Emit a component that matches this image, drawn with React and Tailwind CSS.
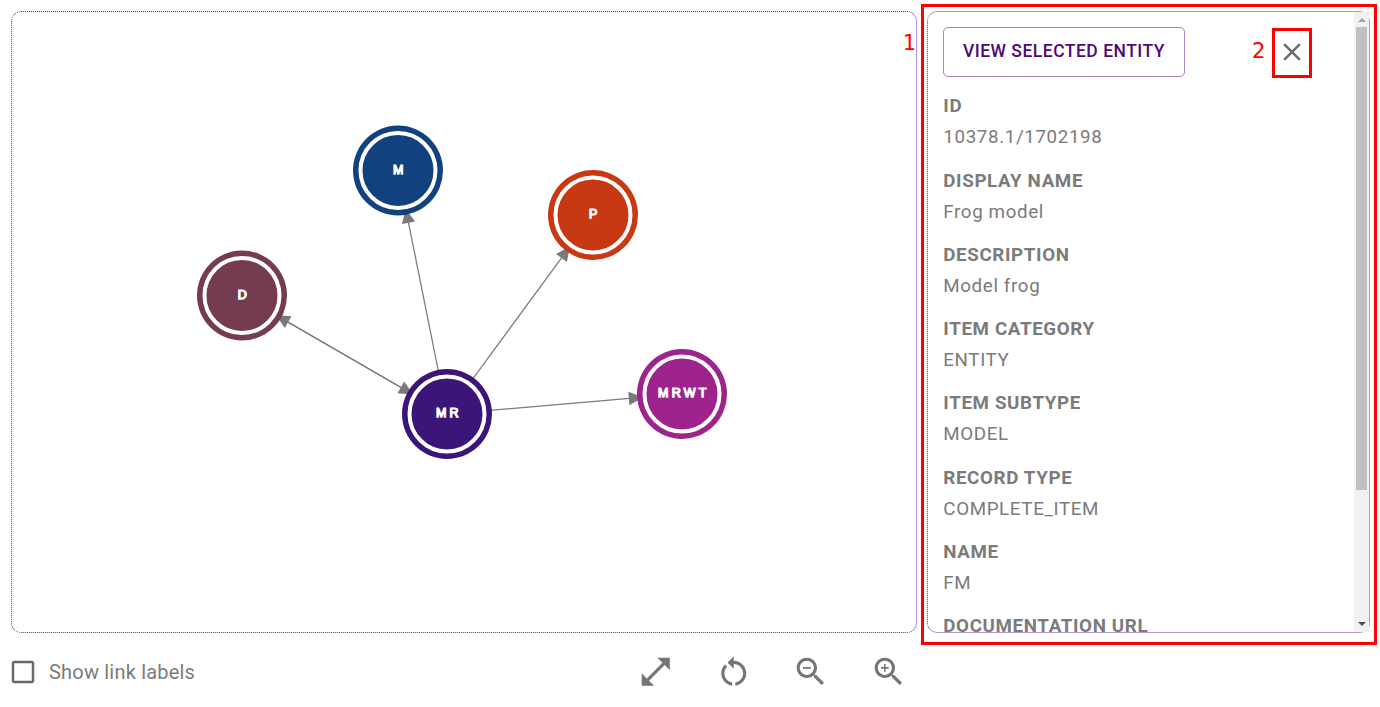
import React from "react";

const nodes = {
  D: { x: 242, y: 295.5, color: "#753b51" },
  M: { x: 398, y: 170.5, color: "#124180" },
  P: { x: 593, y: 215, color: "#c83813" },
  MR: { x: 447, y: 414, color: "#3c1578" },
  MRWT: { x: 682, y: 394, color: "#9e238d" },
};

const links = [
  ["MR", "D"],
  ["D", "MR"],
  ["MR", "M"],
  ["MR", "P"],
  ["MR", "MRWT"],
];

const fields = [
  ["ID", "10378.1/1702198"],
  ["DISPLAY NAME", "Frog model"],
  ["DESCRIPTION", "Model frog"],
  ["ITEM CATEGORY", "ENTITY"],
  ["ITEM SUBTYPE", "MODEL"],
  ["RECORD TYPE", "COMPLETE_ITEM"],
  ["NAME", "FM"],
  ["DOCUMENTATION URL", ""],
];

function Link({ from, to }) {
  const a = nodes[from];
  const b = nodes[to];
  const length = Math.hypot(b.x - a.x, b.y - a.y);
  const angle = (Math.atan2(b.y - a.y, b.x - a.x) * 180) / Math.PI;
  return (
    <g transform={`translate(${a.x} ${a.y}) rotate(${angle})`} fill="#7a7a7a">
      <line x1="0" y1="0" x2={length - 50} y2="0" stroke="#7a7a7a" strokeWidth="1.25" />
      <polygon points={`${length - 53.3},-6.7 ${length - 53.3},6.7 ${length - 39},0`} />
    </g>
  );
}

function Node({ id }) {
  const { x, y, color } = nodes[id];
  return (
    <g>
      <circle cx={x} cy={y} r="45" fill={color} />
      <circle cx={x} cy={y} r="37.5" fill="none" stroke="#fff" strokeWidth="4" />
      <text
        x={x + 1.8}
        y={Math.ceil(y) + 3.1}
        textAnchor="middle"
        fill="#fff"
        stroke="#fff"
        strokeWidth="1.25"
        className="font-['Liberation_Sans',sans-serif] text-[12.5px] tracking-[3.2px]"
      >
        {id}
      </text>
    </g>
  );
}

function Icon({ d, className }) {
  return (
    <svg viewBox="0 0 24 24" className={className} fill="currentColor">
      <path d={d} />
    </svg>
  );
}

const tools = [
  ["Expand", "M21 11V3h-8l3.29 3.29-10 10L3 13v8h8l-3.29-3.29 10-10z"],
  [
    "Reset",
    "M12 5V2L8 6l4 4V7c3.31 0 6 2.69 6 6 0 2.97-2.17 5.43-5 5.91v2.02c3.95-.49 7-3.85 7-7.93 0-4.42-3.58-8-8-8zm-6 8c0-1.65.67-3.15 1.76-4.24L6.34 7.34C4.9 8.79 4 10.79 4 13c0 4.08 3.05 7.44 7 7.93v-2.02c-2.83-.48-5-2.94-5-5.91z",
  ],
  [
    "Zoom out",
    "M15.5 14h-.79l-.28-.27C15.41 12.59 16 11.11 16 9.5 16 5.91 13.09 3 9.5 3S3 5.91 3 9.5 5.91 16 9.5 16c1.61 0 3.09-.59 4.23-1.57l.27.28v.79l5 4.99L20.49 19l-4.99-5zm-6 0C7.01 14 5 11.99 5 9.5S7.01 5 9.5 5 14 7.01 14 9.5 11.99 14 9.5 14zM7 9h5v1H7z",
  ],
  [
    "Zoom in",
    "M15.5 14h-.79l-.28-.27C15.41 12.59 16 11.11 16 9.5 16 5.91 13.09 3 9.5 3S3 5.91 3 9.5 5.91 16 9.5 16c1.61 0 3.09-.59 4.23-1.57l.27.28v.79l5 4.99L20.49 19l-4.99-5zm-6 0C7.01 14 5 11.99 5 9.5S7.01 5 9.5 5 14 7.01 14 9.5 11.99 14 9.5 14zm2.5-4h-2v2H9v-2H7V9h2V7h1v2h2v1z",
  ],
];

function GraphPanel() {
  return (
    <section className="relative h-[622px] w-[906px] rounded-[10px] border border-dotted border-[#65308a] border-r-[#b598cf] [border-right-style:solid]">
      <svg viewBox="12 12 904 620" className="block h-full w-full">
        {links.map(([from, to]) => (
          <Link key={from + to} from={from} to={to} />
        ))}
        {Object.keys(nodes).map((id) => (
          <Node key={id} id={id} />
        ))}
      </svg>
      <span className="absolute top-[19px] right-0 font-['DejaVu_Sans',sans-serif] text-[21px] leading-6 text-[#ff0000]">
        1
      </span>
    </section>
  );
}

function Toolbar() {
  return (
    <div className="flex h-[74px] w-[906px] items-center justify-between pt-1 pr-[10px] text-[#757575]">
      <label className="flex items-center text-[20px] text-[#7b7b7b]">
        <Icon
          className="-ml-[3px] h-[30px] w-[30px] text-[#696969]"
          d="M19 5v14H5V5h14m0-2H5c-1.1 0-2 .9-2 2v14c0 1.1.9 2 2 2h14c1.1 0 2-.9 2-2V5c0-1.1-.9-2-2-2z"
        />
        <span className="ml-[11px] tracking-[0.2px]">Show link labels</span>
      </label>
      <div className="flex gap-[40px]">
        {tools.map(([name, d]) => (
          <button key={name} aria-label={name}>
            <Icon d={d} className="h-[37.5px] w-[37.5px]" />
          </button>
        ))}
      </div>
    </div>
  );
}

function DetailsPanel() {
  return (
    <aside className="h-[641px] w-[456px] border-[3px] border-[#ff0000] p-[3px] pt-1">
      <div className="flex h-[622px] w-[443px] rounded-[10px] border border-[#b598cf] border-x-[#65308a] [border-left-style:dotted] [border-right-style:dotted]">
        <div className="min-w-0 flex-1 overflow-hidden pt-[15px] pl-[15px]">
          <div className="flex h-[51px] items-start">
            <button className="h-[50px] w-[242px] rounded-[5px] border border-[#a884c0] pb-[2px] text-[17.5px] font-medium tracking-[0.5px] text-[#4b0a77]">
              VIEW SELECTED ENTITY
            </button>
            <span className="mt-[9px] ml-[67px] w-[20px] font-['DejaVu_Sans',sans-serif] text-[21px] leading-[31px] text-[#ff0000]">
              2
            </span>
            <button
              aria-label="Close"
              className="mt-px flex h-[50px] w-[40px] items-center justify-center border-[3px] border-[#ff0000] pb-[2px] text-[#6c6c6c]"
            >
              <Icon
                className="h-[30px] w-[30px]"
                d="M19 6.41L17.59 5 12 10.59 6.41 5 5 6.41 10.59 12 5 17.59 6.41 19 12 13.41 17.59 19 19 17.59 13.41 12z"
              />
            </button>
          </div>
          <dl className="pt-[13.4px] pl-[0.3px] text-[18.75px] tracking-[0.63px] text-[#7b7b7b]">
            {fields.map(([label, value]) => (
              <div key={label} className="h-[74.25px]">
                <dt className="h-[31px] leading-[31px] font-bold">{label}</dt>
                <dd className="h-[31px] leading-[31px]">{value}</dd>
              </div>
            ))}
          </dl>
        </div>
        <div className="relative flex w-[15px] flex-col items-center bg-[#f1f1f1]">
          <div className="flex h-[15px] items-center">
            <svg viewBox="0 0 8 4" className="h-1 w-2" fill="#a3a3a3">
              <path d="M0 4 4 0 8 4z" />
            </svg>
          </div>
          <div className="h-[463px] w-[11px] bg-[#c1c1c1]" />
          <div className="mt-auto flex h-[16px] items-center">
            <svg viewBox="0 0 8 4" className="h-1 w-2" fill="#505050">
              <path d="M0 0 4 4 8 0z" />
            </svg>
          </div>
        </div>
      </div>
    </aside>
  );
}

export default function App() {
  return (
    <main className="flex h-[707px] w-[1380px] overflow-hidden bg-white pt-1 pl-[11px] font-['Roboto',sans-serif]">
      <div className="flex w-[910px] flex-col pt-[7px]">
        <GraphPanel />
        <Toolbar />
      </div>
      <DetailsPanel />
    </main>
  );
}
